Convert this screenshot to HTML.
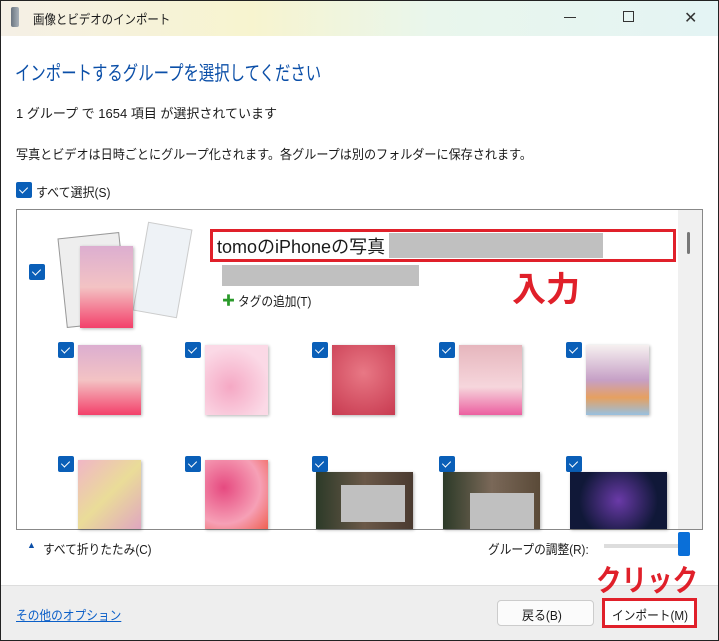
<!DOCTYPE html>
<html><head><meta charset="utf-8"><style>
*{margin:0;padding:0;box-sizing:border-box}
body{width:719px;height:641px;overflow:hidden;background:#fff;font-family:"Liberation Sans","Noto Sans CJK JP",sans-serif;color:#1a1a1a;position:relative}
.win{position:absolute;left:0;top:0;width:719px;height:641px;border:1px solid #222}
.a{position:absolute}
.title{left:1px;top:1px;width:717px;height:35px;background:linear-gradient(90deg,#f5f0e6 0%,#f7f4cf 35%,#e9f6ec 60%,#e4f4f4 100%)}
.cb{position:absolute;width:16px;height:16px;background:#0a5fb8;border-radius:2px}
.cb:after{content:"";position:absolute;left:5px;top:3px;width:4px;height:7px;border:solid #fff;border-width:0 1.3px 1.3px 0;transform:rotate(45deg)}
.th{position:absolute;box-shadow:1px 1px 3px rgba(0,0,0,.3)}
.t{font-size:13px;white-space:nowrap;transform-origin:0 0}
</style></head><body>
<div class="win"></div>
<div class="a title"></div>
<div class="a" style="left:11px;top:7px;width:8px;height:20px;background:linear-gradient(90deg,#6b7580,#a9b2ba);border-radius:2px"></div>
<div class="a t" style="left:33px;top:9px;transform:scaleX(.88)">画像とビデオのインポート</div>
<div class="a" style="left:564px;top:17px;width:12px;height:1px;background:#333"></div>
<div class="a" style="left:623px;top:11px;width:11px;height:11px;border:1px solid #333"></div>
<div class="a" style="left:684px;top:8px;font-size:16px;color:#333">✕</div>
<div class="a t" style="left:15px;top:57px;font-size:20px;color:#0b4fa8;transform:scaleX(.77)">インポートするグループを選択してください</div>
<div class="a t" style="left:16px;top:103px">1 グループ で 1654 項目 が選択されています</div>
<div class="a t" style="left:16px;top:144px;transform:scaleX(.93)">写真とビデオは日時ごとにグループ化されます。各グループは別のフォルダーに保存されます。</div>
<div class="cb" style="left:16px;top:182px"></div>
<div class="a t" style="left:36px;top:182px;transform:scaleX(.92)">すべて選択(S)</div>
<div class="a" style="left:16px;top:209px;width:687px;height:321px;border:1px solid #888;overflow:hidden">
 <div class="a" style="left:661px;top:0;width:24px;height:320px;background:#f0f0f0"></div>
 <div class="a" style="left:670px;top:22px;width:3px;height:22px;background:#777;border-radius:2px"></div>
</div>
<div class="cb" style="left:29px;top:264px"></div>
<div class="a" style="left:62px;top:235px;width:62px;height:90px;background:#eee;border:1px solid #999;transform:rotate(-6deg)"></div>
<div class="a" style="left:140px;top:225px;width:45px;height:90px;background:#eef2f6;border:1px solid #ccc;transform:rotate(10deg)"></div>
<div class="a" style="left:80px;top:246px;width:53px;height:82px;background:linear-gradient(#dcaed0,#f3c3c4 50%,#f3406a);box-shadow:1px 1px 3px rgba(0,0,0,.3)"></div>
<div class="a" style="left:210px;top:229px;width:466px;height:33px;border:3px solid #e0202a"></div>
<div class="a" style="left:217px;top:233px;font-size:18px;white-space:nowrap">tomoのiPhoneの写真</div>
<div class="a" style="left:389px;top:233px;width:214px;height:25px;background:#c0c0c0"></div>
<div class="a" style="left:222px;top:265px;width:197px;height:21px;background:#c0c0c0"></div>
<div class="a" style="left:222px;top:290px;color:#2a9a2a;font-size:13px;font-weight:bold">✚</div>
<div class="a t" style="left:238px;top:291px;transform:scaleX(.9)">タグの追加(T)</div>
<div class="a" style="left:512px;top:262px;font-size:34px;font-weight:bold;color:#e0202a">入力</div>
<div class="cb" style="left:58px;top:342px"></div><div class="th" style="left:78px;top:345px;width:63px;height:70px;background:linear-gradient(#dcaed0,#f3c3c4 50%,#f3406a)"></div>
<div class="cb" style="left:185px;top:342px"></div><div class="th" style="left:205px;top:345px;width:63px;height:70px;background:radial-gradient(circle at 40% 60%,#f5a8c4,#fbd9e6 70%)"></div>
<div class="cb" style="left:312px;top:342px"></div><div class="th" style="left:332px;top:345px;width:63px;height:70px;background:radial-gradient(circle at 50% 40%,#e87885,#c83a50)"></div>
<div class="cb" style="left:439px;top:342px"></div><div class="th" style="left:459px;top:345px;width:63px;height:70px;background:linear-gradient(#e6b6bd,#f6d6dc 60%,#ec5fa0)"></div>
<div class="cb" style="left:566px;top:342px"></div><div class="th" style="left:586px;top:345px;width:63px;height:70px;background:linear-gradient(#f6f0f0,#c6a0c6 50%,#e6a060 75%,#98c0e0)"></div>
<div class="cb" style="left:58px;top:456px"></div><div class="th" style="left:78px;top:460px;width:63px;height:69px;background:linear-gradient(135deg,#f0b6c6,#eadc98 50%,#e0a6c0)"></div>
<div class="cb" style="left:185px;top:456px"></div><div class="th" style="left:205px;top:460px;width:63px;height:69px;background:radial-gradient(circle at 30% 40%,#e64a80,#f6a0b6 60%,#f06050)"></div>
<div class="cb" style="left:312px;top:456px"></div><div class="th" style="left:316px;top:472px;width:97px;height:57px;background:linear-gradient(90deg,#2c3a28,#6a5848 50%,#4a3a30)"></div>
<div class="a" style="left:341px;top:485px;width:64px;height:37px;background:#c0c0c0"></div>
<div class="cb" style="left:439px;top:456px"></div><div class="th" style="left:443px;top:472px;width:97px;height:57px;background:linear-gradient(90deg,#2c3a28,#7a6858 50%,#5a4a38)"></div>
<div class="a" style="left:470px;top:493px;width:64px;height:36px;background:#c0c0c0"></div>
<div class="cb" style="left:566px;top:456px"></div><div class="th" style="left:570px;top:472px;width:97px;height:57px;background:radial-gradient(circle at 50% 50%,#6a3aa8,#101838 70%)"></div>
<div class="a" style="left:27px;top:540px;font-size:9px;color:#0b4fa8">▲</div>
<div class="a t" style="left:43px;top:539px;transform:scaleX(.9)">すべて折りたたみ(C)</div>
<div class="a t" style="left:488px;top:539px;transform:scaleX(.9)">グループの調整(R):</div>
<div class="a" style="left:604px;top:544px;width:80px;height:4px;background:#ddd"></div>
<div class="a" style="left:678px;top:532px;width:12px;height:24px;background:#0a6fd8;border-radius:2px"></div>
<div class="a" style="left:1px;top:585px;width:717px;height:55px;background:#eeeeee;border-top:1px solid #ddd"></div>
<div class="a t" style="left:596px;top:556px;font-size:30px;font-weight:bold;color:#e0202a;transform:scaleX(.85)">クリック</div>
<div class="a t" style="left:16px;top:605px;color:#0b5fc8;text-decoration:underline;transform:scaleX(.9)">その他のオプション</div>
<div class="a" style="left:497px;top:600px;width:97px;height:26px;background:#fbfbfb;border:1px solid #ccc;border-radius:4px"></div>
<div class="a t" style="left:522px;top:605px;transform:scaleX(.92)">戻る(B)</div>
<div class="a" style="left:602px;top:598px;width:95px;height:30px;background:#fff;border:3px solid #e0202a"></div>
<div class="a t" style="left:612px;top:605px;transform:scaleX(.9)">インポート(M)</div>
</body></html>
